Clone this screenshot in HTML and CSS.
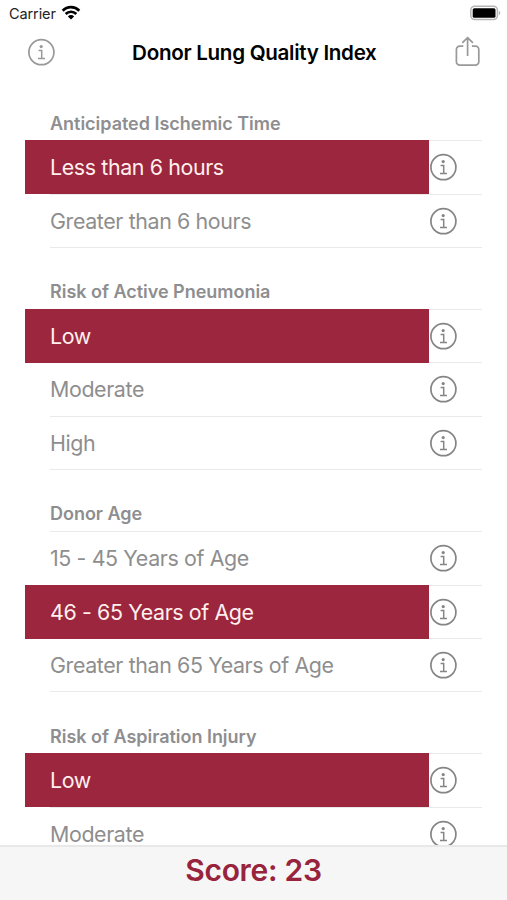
FILE: index.html
```html
<!DOCTYPE html>
<html lang="en">
<head>
<meta charset="utf-8">
<title>Donor Lung Quality Index</title>
<link rel="stylesheet" href="styles.css">
</head>
<body>
<svg class="defs" width="0" height="0">
  <symbol id="info" viewBox="0 0 28 28">
    <circle cx="14.4" cy="14.2" r="12.5" fill="none" stroke="currentColor" stroke-width="1.7"/>
    <circle cx="14.2" cy="8.6" r="1.6" fill="currentColor"/>
    <path d="M11.600 12.600h3.100v7.700M11 20.500h7" fill="none" stroke="currentColor" stroke-width="1.5"/>
  </symbol>
</svg>
<div class="phone">
  <header class="status">
    <span class="carrier">Carrier</span>
    <svg class="wifi" width="20" height="15" viewBox="0 0 20 15">
      <g fill="none" stroke="#000" stroke-width="2.7">
        <path d="M1.700 5.700a11.600 11.600 0 0 1 16.600 0"/>
        <path d="M4.700 9a7.400 7.400 0 0 1 10.600 0"/>
      </g>
      <path d="M6.900 11.400a4.300 4.300 0 0 1 6.200 0L10 14.500z"/>
    </svg>
    <svg class="battery" width="31" height="16" viewBox="0 0 31 16">
      <rect x="0.8" y="1.2" width="26.6" height="13.4" rx="4" fill="#fff" stroke="#b5b5b5" stroke-width="1.5"/>
      <rect x="2.7" y="3.2" width="22.8" height="9.6" rx="1.6"/>
      <path d="M28.800 5.800c2 .8 2 3.600 0 4.400z" fill="#b5b5b5"/>
    </svg>
  </header>
  <nav class="nav">
    <svg class="icon"><use href="#info"/></svg>
    <h1 class="title">Donor Lung Quality Index</h1>
    <svg class="share" width="26" height="32" viewBox="0 0 26 32" fill="none" stroke="#999" stroke-width="1.7" stroke-linejoin="round">
      <path d="M9.300 10.200H5.800a3.400 3.400 0 0 0-3.400 3.400v12.200a3.400 3.400 0 0 0 3.400 3.400h15.600a3.400 3.400 0 0 0 3.400-3.400V13.600a3.400 3.400 0 0 0-3.400-3.400h-3.500M13.600 20V1.800M8.300 6.900l5.300-5.300 5.300 5.300"/>
    </svg>
  </nav>
  <main class="list">
    <section class="group">
      <h2 class="heading">Anticipated Ischemic Time</h2>
      <div class="row selected"><span class="label">Less than 6 hours</span><svg class="icon"><use href="#info"/></svg></div>
      <div class="row"><span class="label">Greater than 6 hours</span><svg class="icon"><use href="#info"/></svg></div>
    </section>
    <section class="group">
      <h2 class="heading">Risk of Active Pneumonia</h2>
      <div class="row selected"><span class="label">Low</span><svg class="icon"><use href="#info"/></svg></div>
      <div class="row"><span class="label">Moderate</span><svg class="icon"><use href="#info"/></svg></div>
      <div class="row"><span class="label">High</span><svg class="icon"><use href="#info"/></svg></div>
    </section>
    <section class="group">
      <h2 class="heading">Donor Age</h2>
      <div class="row"><span class="label">15 - 45 Years of Age</span><svg class="icon"><use href="#info"/></svg></div>
      <div class="row selected"><span class="label">46 - 65 Years of Age</span><svg class="icon"><use href="#info"/></svg></div>
      <div class="row"><span class="label">Greater than 65 Years of Age</span><svg class="icon"><use href="#info"/></svg></div>
    </section>
    <section class="group">
      <h2 class="heading">Risk of Aspiration Injury</h2>
      <div class="row selected"><span class="label">Low</span><svg class="icon"><use href="#info"/></svg></div>
      <div class="row"><span class="label">Moderate</span><svg class="icon"><use href="#info"/></svg></div>
    </section>
  </main>
  <footer class="score">Score: 23</footer>
</div>
</body>
</html>
```

FILE: styles.css
```css
* { box-sizing: border-box; }
body {
  margin: 0;
  background: #fff;
  font-family: Inter, "Liberation Sans", sans-serif;
}
h1, h2 { margin: 0; }
.defs { display: block; }
.phone {
  width: 507px;
  height: 900px;
  display: flex;
  flex-direction: column;
  overflow: hidden;
}
.status {
  height: 26px;
  padding: 0 6px 0 9px;
  display: flex;
  align-items: center;
  flex: none;
}
.carrier { font-size: 14.5px; line-height: 26px; padding-top: 1px; letter-spacing: -0.1px; color: #222; }
.wifi { margin-left: 5px; margin-top: -2px; }
.battery { margin-left: auto; }
.nav {
  height: 53px;
  flex: none;
  padding: 0 27px;
  display: flex;
  align-items: center;
  justify-content: space-between;
}
.nav .icon { margin-top: -1px; margin-left: -0.4px; color: #999; }
.title { font-size: 20.6px; font-weight: 600; letter-spacing: -0.3px; color: #000; }
.share { margin-top: -1px; }
.icon { width: 28px; height: 28px; color: #858585; flex: none; display: block; }
.list { flex: 1; min-height: 0; overflow: hidden; padding: 0 25px; }
.heading {
  height: 61px;
  padding: 34.6px 0 0 25px;
  font-size: 18px;
  line-height: 20px;
  font-weight: 600;
  letter-spacing: -0.02px;
  color: #8e8e90;
}
.row {
  height: 53.75px;
  display: grid;
  grid-template-columns: 404px 53px;
  align-items: center;
  background: linear-gradient(#e9e9e9, #e9e9e9) 25px 0 / 100% 1px no-repeat;
}
.row:last-child {
  background: linear-gradient(#e9e9e9, #e9e9e9) 25px 0 / 100% 1px no-repeat,
    linear-gradient(#e9e9e9, #e9e9e9) 25px 100% / 100% 1px no-repeat;
}
.label {
  height: 100%;
  padding-left: 25px;
  font-size: 21.4px;
  line-height: 54px;
  letter-spacing: -0.38px;
  color: #8e8e8e;
  white-space: nowrap;
}
.selected .label { background: #9b263d; color: #fff0ee; }
.score {
  height: 55px;
  flex: none;
  border-top: 2px solid #e8e8e8;
  background: #f6f6f6;
  color: #98233d;
  font-size: 30px;
  line-height: 46px;
  font-weight: 600;
  letter-spacing: -0.3px;
  text-align: center;
}
```
